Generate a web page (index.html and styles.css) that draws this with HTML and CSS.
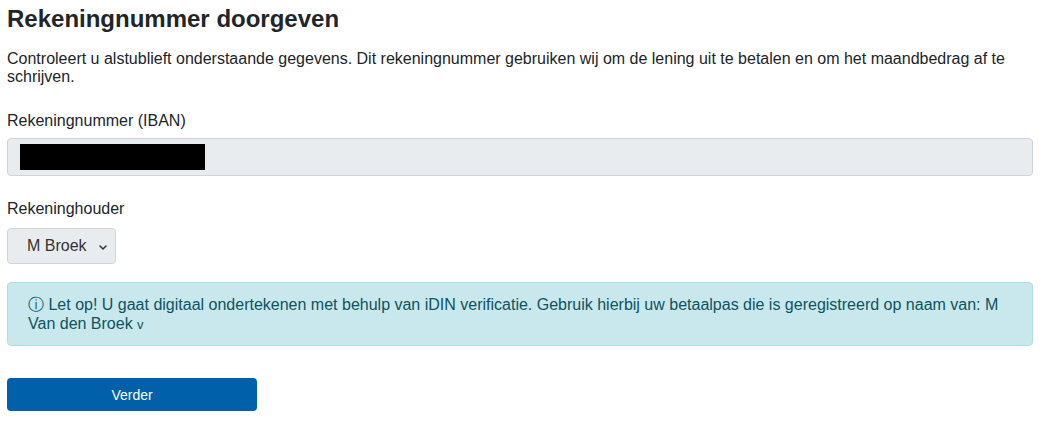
FILE: index.html
```html
<!DOCTYPE html>
<html lang="nl">
<head>
	<meta charset="UTF-8">
	<title>Rekeningnummer doorgeven</title>
	<link rel="stylesheet" href="styles.css">
</head>
<body>
	<div class="page">
		<h1 class="title">Rekeningnummer doorgeven</h1>
		<p class="intro">Controleert u alstublieft onderstaande gegevens. Dit rekeningnummer gebruiken wij om de lening uit te betalen en om het maandbedrag af te schrijven.</p>

		<div class="field">
			<label class="field_label">Rekeningnummer (IBAN)</label>
			<div class="input_box"><span class="redacted"></span></div>
		</div>

		<div class="field field_select">
			<label class="field_label">Rekeninghouder</label>
			<div class="select_box">
				<span>M Broek</span>
				<svg class="chevron" width="8" height="5" viewBox="0 0 8 5"><path d="M1 1l3 3 3-3" fill="none" stroke="#333" stroke-width="1.5" stroke-linecap="round" stroke-linejoin="round"/></svg>
			</div>
		</div>

		<div class="alert_info">
			&#9432; Let op! U gaat digitaal ondertekenen met behulp van iDIN verificatie. Gebruik hierbij uw betaalpas die is geregistreerd op naam van: M Van den Broek <span class="toggle">v</span>
		</div>

		<button class="btn_next" type="button">Verder</button>
	</div>
</body>
</html>
```

FILE: styles.css
```css
body{
	margin:0;
	background-color:#fff;
	color:#212529;
	font-family:"Liberation Sans",Arial,sans-serif;
	font-size:16px;
}
.page{
	padding:5px 8px 0 7px;
}
.title{
	margin:0 0 17px 0;
	font-size:24px;
	line-height:28px;
	font-weight:bold;
}
.intro{
	margin:0 0 26px 0;
	font-size:16px;
	line-height:18px;
}
.field{
	margin-bottom:24px;
}
.field_select{
	margin-bottom:18px;
}
.field_label{
	display:block;
	margin-bottom:8px;
	font-size:16px;
	line-height:18px;
}
.input_box{
	height:36px;
	border:1px solid #ced4da;
	border-radius:4px;
	background-color:#e9ecef;
	display:flex;
	align-items:center;
	padding-left:12px;
}
.redacted{
	display:block;
	width:185px;
	height:26px;
	background-color:#000;
}
.select_box{
	margin-top:10px;
	width:80px;
	height:34px;
	border:1px solid #ced4da;
	border-radius:4px;
	background-color:#e9ecef;
	display:flex;
	align-items:center;
	justify-content:space-between;
	padding:0 8px 0 19px;
	color:#333;
}
.chevron{
	margin-top:2px;
}
.alert_info{
	padding:12px 20px;
	border:1px solid #b3dde5;
	border-radius:4px;
	background-color:#c8e8ee;
	color:#0c5460;
	font-size:16px;
	line-height:19px;
}
.toggle{
	font-size:13px;
	line-height:1;
}
.btn_next{
	display:block;
	margin-top:32px;
	width:250px;
	height:33px;
	border:0;
	border-radius:4px;
	background-color:#0060a9;
	color:#fff;
	font-family:"Liberation Sans",Arial,sans-serif;
	font-size:14px;
	cursor:pointer;
}
```
